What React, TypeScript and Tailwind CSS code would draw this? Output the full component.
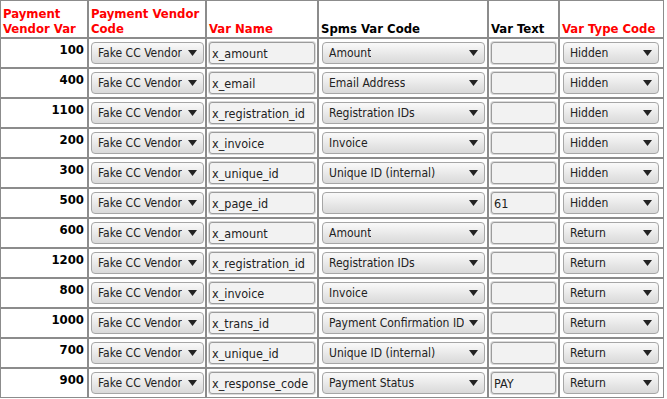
const rows = [
  { id: 100, name: 'x_amount', spms: 'Amount', text: '', type: 'Hidden' },
  { id: 400, name: 'x_email', spms: 'Email Address', text: '', type: 'Hidden' },
  { id: 1100, name: 'x_registration_id', spms: 'Registration IDs', text: '', type: 'Hidden' },
  { id: 200, name: 'x_invoice', spms: 'Invoice', text: '', type: 'Hidden' },
  { id: 300, name: 'x_unique_id', spms: 'Unique ID (internal)', text: '', type: 'Hidden' },
  { id: 500, name: 'x_page_id', spms: '', text: '61', type: 'Hidden' },
  { id: 600, name: 'x_amount', spms: 'Amount', text: '', type: 'Return' },
  { id: 1200, name: 'x_registration_id', spms: 'Registration IDs', text: '', type: 'Return' },
  { id: 800, name: 'x_invoice', spms: 'Invoice', text: '', type: 'Return' },
  { id: 1000, name: 'x_trans_id', spms: 'Payment Confirmation ID', text: '', type: 'Return' },
  { id: 700, name: 'x_unique_id', spms: 'Unique ID (internal)', text: '', type: 'Return' },
  { id: 900, name: 'x_response_code', spms: 'Payment Status', text: 'PAY', type: 'Return' },
];

function Select({ value, width }: { value: string; width: string }) {
  return (
    <div
      className={`${width} h-[22px] flex items-center justify-between pl-[6px] pr-[6px] border border-[#a6a6a6] rounded-[4px] bg-gradient-to-b from-[#fafafa] to-[#d9d9d9] text-[12px] text-[#222] overflow-hidden`}
    >
      <span className="whitespace-nowrap overflow-hidden">{value}</span>
      <svg width="9" height="6" viewBox="0 0 9 6" className="shrink-0 ml-1">
        <path d="M0 0 H9 L4.5 6 Z" fill="#222" />
      </svg>
    </div>
  );
}

function Input({ value, width }: { value: string; width: string }) {
  return (
    <input
      readOnly
      value={value}
      className={`${width} block h-[22px] px-[2px] border border-[#9c9c9c] rounded-[3px] bg-[#f2f2f2] ring-1 ring-[#dadada] text-[12.5px] text-[#222] outline-none`}
    />
  );
}

export default function App() {
  const th = 'border border-[#8c8c8c] align-bottom text-left font-bold text-[13px] leading-[15px] px-[2px] pb-[1px]';
  const td = 'border border-[#8c8c8c] align-top h-[30px] pt-[3px]';
  return (
    <div className="bg-white w-[667px] h-[399px] overflow-hidden font-['DejaVu_Sans_Condensed','DejaVu_Sans',sans-serif] [font-stretch:condensed]">
      <table className="border-separate border-spacing-0 table-fixed w-[664px]">
        <colgroup>
          <col className="w-[88px]" />
          <col className="w-[118px]" />
          <col className="w-[112px]" />
          <col className="w-[170px]" />
          <col className="w-[71px]" />
          <col className="w-[105px]" />
        </colgroup>
        <thead>
          <tr className="h-[38px]">
            <th className={`${th} text-[#ff0000]`}>Payment Vendor Var</th>
            <th className={`${th} text-[#ff0000]`}>Payment Vendor Code</th>
            <th className={`${th} text-[#ff0000]`}>Var Name</th>
            <th className={`${th} text-black`}>Spms Var Code</th>
            <th className={`${th} text-black`}>Var Text</th>
            <th className={`${th} text-[#ff0000] whitespace-nowrap`}>Var Type Code</th>
          </tr>
        </thead>
        <tbody>
          {rows.map((r, i) => (
            <tr key={i}>
              <td className={`${td} text-right font-bold text-[13px] leading-[15px] pr-[3px] text-black`}>{r.id}</td>
              <td className={`${td} pl-[2px]`}>
                <Select value="Fake CC Vendor" width="w-[113px]" />
              </td>
              <td className={`${td} pl-[2px]`}>
                <Input value={r.name} width="w-[106px]" />
              </td>
              <td className={`${td} pl-[3px]`}>
                <Select value={r.spms} width="w-[163px]" />
              </td>
              <td className={`${td} pl-[2px]`}>
                <Input value={r.text} width="w-[65px]" />
              </td>
              <td className={`${td} pl-[3px]`}>
                <Select value={r.type} width="w-[96px]" />
              </td>
            </tr>
          ))}
        </tbody>
      </table>
    </div>
  );
}
